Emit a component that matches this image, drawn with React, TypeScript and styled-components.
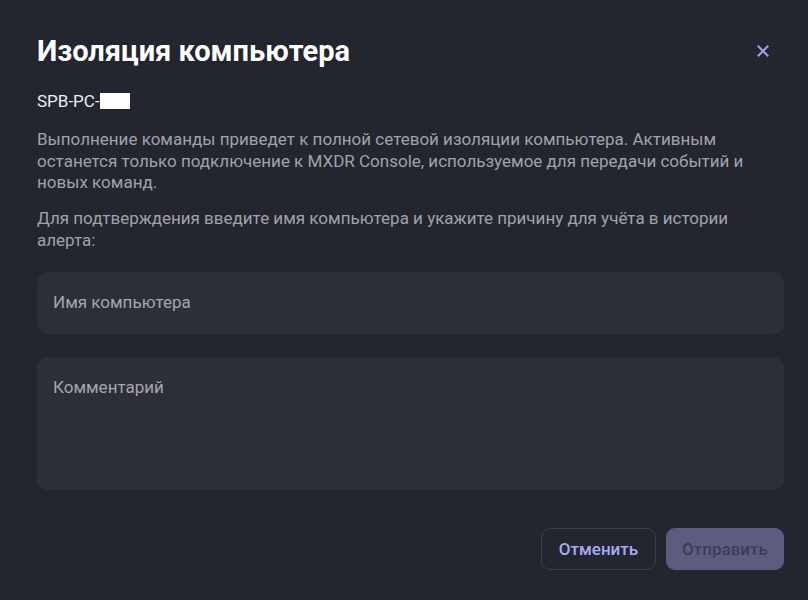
import React from "react";
import styled, { createGlobalStyle } from "styled-components";

const Global = createGlobalStyle`
  html, body { margin: 0; padding: 0; background: #23262f; }
  body { font-family: Roboto, "Noto Sans", sans-serif; }
`;

const Dialog = styled.div`
  width: 808px;
  height: 600px;
  box-sizing: border-box;
  background: #23262f;
  padding: 33px 24px 0 37px;
  display: flex;
  flex-direction: column;
`;

const Header = styled.div`
  display: flex;
  align-items: center;
  justify-content: space-between;
  height: 36px;
`;

const Title = styled.h1`
  margin: 0;
  font-size: 29px;
  line-height: 36px;
  font-weight: 700;
  color: #ffffff;
`;

const CloseButton = styled.button`
  width: 24px;
  height: 24px;
  margin-right: 9px;
  margin-top: 0px;
  padding: 0;
  border: none;
  background: transparent;
  display: flex;
  align-items: center;
  justify-content: center;
  cursor: pointer;
`;

const Host = styled.div`
  margin-top: 20px;
  display: flex;
  align-items: center;
  font-size: 17px;
  line-height: 24px;
  color: #ececf0;
`;

const Redacted = styled.span`
  display: inline-block;
  width: 30px;
  height: 16px;
  margin-top: -1px;
  background: #ffffff;
`;

const Text = styled.p<{ $gap: number }>`
  margin: ${(p) => p.$gap}px 0 0;
  font-size: 17px;
  line-height: 21.5px;
  color: #a1a2aa;
`;

const Field = styled.div<{ $h: number; $gap: number }>`
  margin-top: ${(p) => p.$gap}px;
  height: ${(p) => p.$h}px;
  box-sizing: border-box;
  background: #2d2f38;
  border-radius: 10px;
  padding: 18px 16px;
  font-size: 17px;
  line-height: 24px;
  color: #a5a6ae;
`;

const Actions = styled.div`
  margin-top: 38px;
  display: flex;
  justify-content: flex-end;
  gap: 10px;
`;

const Button = styled.button<{ $primary?: boolean }>`
  height: 42px;
  box-sizing: border-box;
  border-radius: 9px;
  font-family: Roboto, sans-serif;
  font-size: 17px;
  font-weight: 500;
  padding: 0;
  border: 1px solid ${(p) => (p.$primary ? "#5d5c7e" : "#3a3d4a")};
  background: ${(p) => (p.$primary ? "#5d5c7e" : "transparent")};
  color: ${(p) => (p.$primary ? "#3d3c56" : "#a9abf6")};
  width: ${(p) => (p.$primary ? "118px" : "115px")};
`;

export default function App() {
  return (
    <>
      <Global />
      <Dialog>
        <Header>
          <Title>Изоляция компьютера</Title>
          <CloseButton aria-label="close">
            <svg width="12" height="12" viewBox="0 0 12 12">
              <path d="M1.5 1.5 L10.5 10.5 M10.5 1.5 L1.5 10.5" stroke="#a3a1e3" strokeWidth="2" strokeLinecap="square" />
            </svg>
          </CloseButton>
        </Header>
        <Host>
          SPB-PC-<Redacted />
        </Host>
        <Text $gap={16}>
          Выполнение команды приведет к полной сетевой изоляции компьютера. Активным останется только
          подключение к MXDR Console, используемое для передачи событий и новых команд.
        </Text>
        <Text $gap={14.5}>
          Для подтверждения введите имя компьютера и укажите причину для учёта в истории алерта:
        </Text>
        <Field $h={62} $gap={20.5}>Имя компьютера</Field>
        <Field $h={133} $gap={23}>Комментарий</Field>
        <Actions>
          <Button>Отменить</Button>
          <Button $primary>Отправить</Button>
        </Actions>
      </Dialog>
    </>
  );
}
